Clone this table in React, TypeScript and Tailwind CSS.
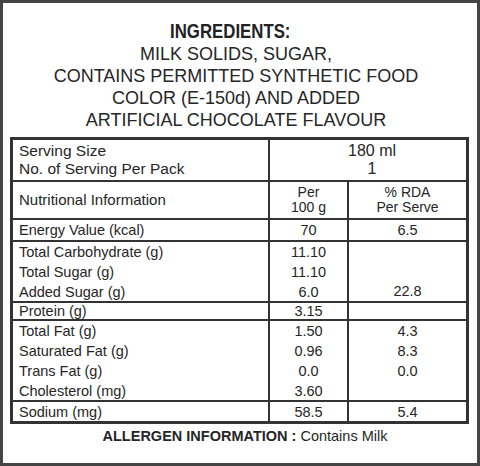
import React from "react";

type Row = { label: string; per100: string; rda: string };

const groups: { h: string; rows: Row[] }[] = [
    { h: "h-[22px]", rows: [{ label: "Energy Value (kcal)", per100: "70", rda: "6.5" }] },
    {
        h: "h-[61px]",
        rows: [
            { label: "Total Carbohydrate (g)", per100: "11.10", rda: "" },
            { label: "Total Sugar (g)", per100: "11.10", rda: "" },
            { label: "Added Sugar (g)", per100: "6.0", rda: "22.8" },
        ],
    },
    { h: "h-[18px]", rows: [{ label: "Protein (g)", per100: "3.15", rda: "" }] },
    {
        h: "h-[81px]",
        rows: [
            { label: "Total Fat (g)", per100: "1.50", rda: "4.3" },
            { label: "Saturated Fat (g)", per100: "0.96", rda: "8.3" },
            { label: "Trans Fat (g)", per100: "0.0", rda: "0.0" },
            { label: "Cholesterol (mg)", per100: "3.60", rda: "" },
        ],
    },
    { h: "h-[19px]", rows: [{ label: "Sodium (mg)", per100: "58.5", rda: "5.4" }] },
];

const line = "border-[#333]";

export default function App() {
    return (
        <div
            className="w-[480px] h-[466px] bg-white border-[3px] border-[#444] text-[#262626] overflow-hidden"
            style={{ fontFamily: '"Liberation Sans", Arial, sans-serif' }}
        >
            <div className="pt-[16px] pr-[8px] flex flex-col items-center">
                {/* condensed bold heading */}
                <h1 className="text-[21px] leading-[24px] font-bold mr-[12px] scale-x-[0.8] text-[#222]">
                    INGREDIENTS:
                </h1>
                <p className="text-[18px] leading-[22px] text-center">
                    MILK SOLIDS, SUGAR,
                    <br />
                    CONTAINS PERMITTED SYNTHETIC FOOD
                    <br />
                    COLOR (E-150d) AND ADDED
                    <br />
                    ARTIFICIAL CHOCOLATE FLAVOUR
                </p>
            </div>

            <div className={`mt-[6px] ml-[7px] w-[459px] border-[3px] ${line} flex flex-col`}>
                {/* serving */}
                <div className={`flex h-[42px] border-b-2 ${line}`}>
                    <div className={`w-[257px] border-r-2 ${line} pl-[6px] flex flex-col justify-center text-[15.5px] leading-[18px]`}>
                        <span>Serving Size</span>
                        <span>No. of Serving Per Pack</span>
                    </div>
                    <div className="flex-1 flex flex-col justify-center items-center text-[16px] leading-[18px] pl-[8px]">
                        <span>180 ml</span>
                        <span>1</span>
                    </div>
                </div>

                {/* header */}
                <div className={`flex h-[38px] border-b-2 ${line}`}>
                    <div className={`w-[257px] border-r-2 ${line} pl-[6px] flex items-center text-[15px]`}>
                        Nutritional Information
                    </div>
                    <div className={`w-[79px] border-r-2 ${line} flex flex-col items-center justify-center text-[14px] leading-[15px]`}>
                        <span>Per</span>
                        <span>100 g</span>
                    </div>
                    <div className="flex-1 flex flex-col items-center justify-center text-[14px] leading-[15px]">
                        <span>% RDA</span>
                        <span>Per Serve</span>
                    </div>
                </div>

                {groups.map((g, gi) => (
                    <div
                        key={gi}
                        className={`flex ${g.h} ${gi < groups.length - 1 ? `border-b-2 ${line}` : ""} text-[14.5px] leading-[20px]`}
                    >
                        <div className={`w-[257px] border-r-2 ${line} pl-[6px] flex flex-col justify-center`}>
                            {g.rows.map((r) => (
                                <span key={r.label}>{r.label}</span>
                            ))}
                        </div>
                        <div className={`w-[79px] border-r-2 ${line} flex flex-col justify-center items-center`}>
                            {g.rows.map((r) => (
                                <span key={r.label}>{r.per100}</span>
                            ))}
                        </div>
                        <div className="flex-1 flex flex-col justify-center items-center">
                            {g.rows.map((r) => (
                                <span key={r.label} className="h-[20px]">
                                    {r.rda}
                                </span>
                            ))}
                        </div>
                    </div>
                ))}
            </div>

            <p className="mt-[2px] pl-[10px] text-center text-[14.5px] leading-[20px]">
                <span className="font-bold">ALLERGEN INFORMATION : </span>
                Contains Milk
            </p>
        </div>
    );
}
